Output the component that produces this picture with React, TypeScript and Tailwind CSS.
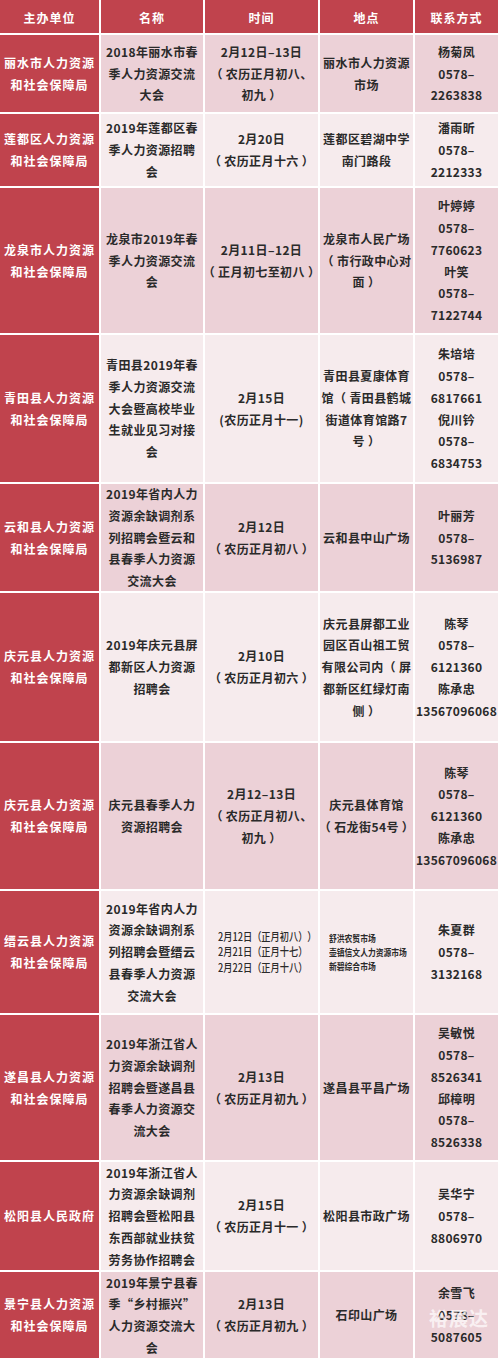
import React from "react";

type Row = {
  org: string[];
  name: string[];
  time: string[];
  place: string[];
  contact: string[];
  dark: boolean;
  smallTime?: boolean;
};

const rows: Row[] = [
  {
    org: ["丽水市人力资源", "和社会保障局"],
    name: ["2018年丽水市春", "季人力资源交流", "大会"],
    time: ["2月12日–13日", "（农历正月初八、", "初九）"],
    place: ["丽水市人力资源", "市场"],
    contact: ["杨菊凤", "0578–", "2263838"],
    dark: true,
  },
  {
    org: ["莲都区人力资源", "和社会保障局"],
    name: ["2019年莲都区春", "季人力资源招聘", "会"],
    time: ["2月20日", "（农历正月十六）"],
    place: ["莲都区碧湖中学", "南门路段"],
    contact: ["潘雨昕", "0578–", "2212333"],
    dark: false,
  },
  {
    org: ["龙泉市人力资源", "和社会保障局"],
    name: ["龙泉市2019年春", "季人力资源交流", "会"],
    time: ["2月11日–12日", "（正月初七至初八）"],
    place: ["龙泉市人民广场", "（市行政中心对", "面）"],
    contact: ["叶婷婷", "0578–", "7760623", "叶笑", "0578–", "7122744"],
    dark: true,
  },
  {
    org: ["青田县人力资源", "和社会保障局"],
    name: ["青田县2019年春", "季人力资源交流", "大会暨高校毕业", "生就业见习对接", "会"],
    time: ["2月15日", "(农历正月十一)"],
    place: ["青田县夏康体育", "馆（青田县鹤城", "街道体育馆路7", "号）"],
    contact: ["朱培培", "0578–", "6817661", "倪川钤", "0578–", "6834753"],
    dark: false,
  },
  {
    org: ["云和县人力资源", "和社会保障局"],
    name: ["2019年省内人力", "资源余缺调剂系", "列招聘会暨云和", "县春季人力资源", "交流大会"],
    time: ["2月12日", "（农历正月初八）"],
    place: ["云和县中山广场"],
    contact: ["叶丽芳", "0578–", "5136987"],
    dark: true,
  },
  {
    org: ["庆元县人力资源", "和社会保障局"],
    name: ["2019年庆元县屏", "都新区人力资源", "招聘会"],
    time: ["2月10日", "（农历正月初六）"],
    place: ["庆元县屏都工业", "园区百山祖工贸", "有限公司内（屏", "都新区红绿灯南", "侧）"],
    contact: ["陈琴", "0578–", "6121360", "陈承忠", "13567096068"],
    dark: false,
  },
  {
    org: ["庆元县人力资源", "和社会保障局"],
    name: ["庆元县春季人力", "资源招聘会"],
    time: ["2月12–13日", "（农历正月初八、", "初九）"],
    place: ["庆元县体育馆", "（石龙街54号）"],
    contact: ["陈琴", "0578–", "6121360", "陈承忠", "13567096068"],
    dark: true,
  },
  {
    org: ["缙云县人力资源", "和社会保障局"],
    name: ["2019年省内人力", "资源余缺调剂系", "列招聘会暨缙云", "县春季人力资源", "交流大会"],
    time: ["2月12日（正月初八））", "2月21日（正月十七）", "2月22日（正月十八）"],
    place: ["舒洪农贸市场", "壶镇信文人力资源市场", "新碧综合市场"],
    contact: ["朱夏群", "0578–", "3132168"],
    dark: false,
    smallTime: true,
  },
  {
    org: ["遂昌县人力资源", "和社会保障局"],
    name: ["2019年浙江省人", "力资源余缺调剂", "招聘会暨遂昌县", "春季人力资源交", "流大会"],
    time: ["2月13日", "（农历正月初九）"],
    place: ["遂昌县平昌广场"],
    contact: ["吴敏悦", "0578–", "8526341", "邱樟明", "0578–", "8526338"],
    dark: true,
  },
  {
    org: ["松阳县人民政府"],
    name: ["2019年浙江省人", "力资源余缺调剂", "招聘会暨松阳县", "东西部就业扶贫", "劳务协作招聘会"],
    time: ["2月15日", "（农历正月十一）"],
    place: ["松阳县市政广场"],
    contact: ["吴华宁", "0578–", "8806970"],
    dark: false,
  },
  {
    org: ["景宁县人力资源", "和社会保障局"],
    name: ["2019年景宁县春", "季“乡村振兴”", "人力资源交流大", "会"],
    time: ["2月13日", "（农历正月初九）"],
    place: ["石印山广场"],
    contact: ["余雪飞", "0578–", "5087605"],
    dark: true,
  },
];

function Paren({ text }: { text: string }) {
  const parts = text.split(/([（）])/);
  return (
    <>
      {parts.map((p, i) =>
        p === "（" ? (
          <span key={i} className="mr-[3px]">
            （
          </span>
        ) : p === "）" ? (
          <span key={i} className="ml-[3px]">
            ）
          </span>
        ) : (
          <React.Fragment key={i}>{p}</React.Fragment>
        )
      )}
    </>
  );
}

function Lines({ lines }: { lines: string[] }) {
  return (
    <>
      {lines.map((l, i) => (
        <div key={i} className="whitespace-nowrap">
          <Paren text={l} />
        </div>
      ))}
    </>
  );
}

export default function App() {
  const headers = ["主办单位", "名称", "时间", "地点", "联系方式"];
  return (
    <div className="w-[500px] h-[1363px] bg-white pb-[5px] font-['Noto_Sans_CJK_SC','Noto_Sans',sans-serif] font-bold [text-spacing-trim:space-all]">
      <div className="grid grid-cols-[99px_102px_113px_93px_83px] grid-rows-[33px_77px_72px_145px_147px_107px_148px_146px_122px_145px_108px_86px] gap-[2px] pr-[2px]">
        {headers.map((h) => (
          <div
            key={h}
            className="bg-[#c0434d] text-white text-[12px] tracking-[1px] flex items-center justify-center pt-[2px]"
          >
            {h}
          </div>
        ))}
        {rows.map((r, i) => {
          const bg = r.dark ? "bg-[#ecd1d7]" : "bg-[#f6ebed]";
          const last = i === rows.length - 1;
          return (
            <React.Fragment key={i}>
              <div className="bg-[#c0434d] text-white text-[12px] tracking-[1px] leading-[22px] flex flex-col items-center justify-center text-center">
                <Lines lines={r.org} />
              </div>
              <div
                className={`${bg} text-[#2a2a2a] text-[12px] tracking-[0.4px] leading-[21.7px] flex flex-col items-center justify-center text-center`}
              >
                <Lines lines={r.name} />
              </div>
              {r.smallTime ? (
                <div className={`${bg} text-[#2a2a2a] flex flex-col justify-center pl-[13px]`}>
                  {r.time.map((l, k) => (
                    <div
                      key={k}
                      className="whitespace-nowrap text-[11.5px] font-medium leading-[15.5px] scale-x-[0.8] origin-left"
                    >
                      {l}
                    </div>
                  ))}
                </div>
              ) : (
                <div
                  className={`${bg} text-[#2a2a2a] text-[12px] tracking-[0.4px] leading-[21.7px] flex flex-col items-center justify-center text-center`}
                >
                  <Lines lines={r.time} />
                </div>
              )}
              {r.smallTime ? (
                <div className={`${bg} text-[#2a2a2a] flex flex-col justify-center pl-[9px]`}>
                  {r.place.map((l, k) => (
                    <div
                      key={k}
                      className="whitespace-nowrap text-[9.5px] leading-[14px] scale-x-[0.82] origin-left"
                    >
                      {l}
                    </div>
                  ))}
                </div>
              ) : (
                <div
                  className={`${bg} text-[#2a2a2a] text-[12px] tracking-[0.4px] leading-[21.7px] flex flex-col items-center justify-center text-center`}
                >
                  <Lines lines={r.place} />
                </div>
              )}
              <div
                className={`${bg} relative text-[#2a2a2a] text-[12px] tracking-[0.3px] leading-[21.7px] flex flex-col items-center justify-center text-center`}
              >
                <Lines lines={r.contact} />
                {last && (
                  <div className="absolute left-[14px] top-[36px] text-[19px] font-bold tracking-[1px] text-white/70 leading-none">
                    裕展达
                  </div>
                )}
              </div>
            </React.Fragment>
          );
        })}
      </div>
    </div>
  );
}
